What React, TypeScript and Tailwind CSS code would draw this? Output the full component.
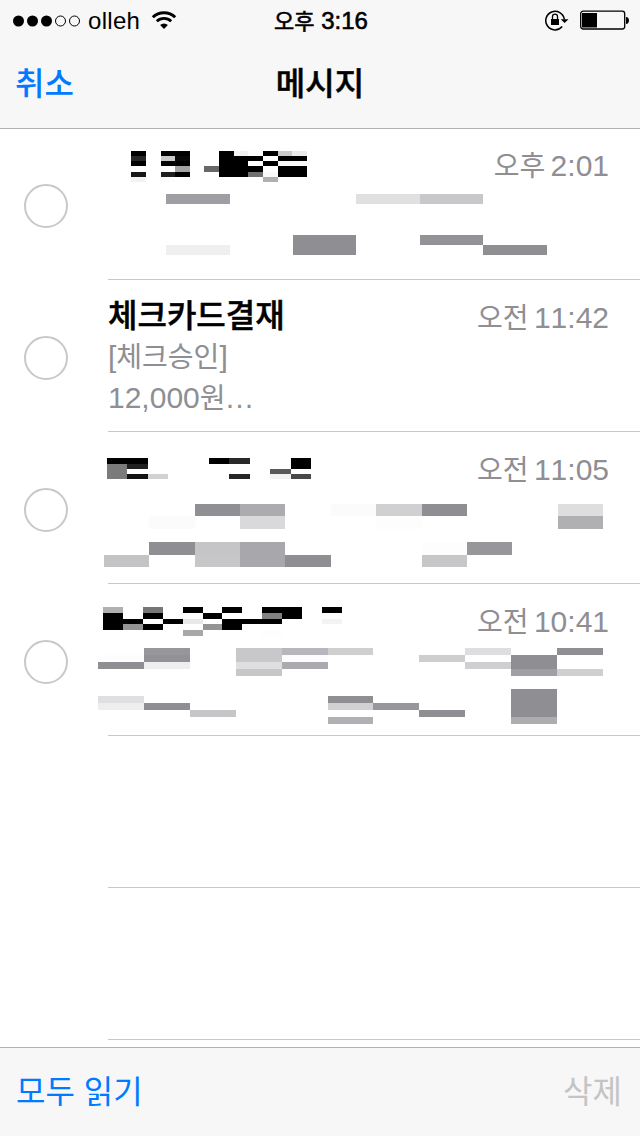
import React, { useState } from "react";
import clsx from "clsx";

interface MosaicGrid {
  xs: number[];
  ys: number[];
  rows: string[];
}

interface Thread {
  id: number;
  period: string;
  time: string;
  title?: string;
  preview?: React.ReactNode;
  titleMosaic?: MosaicGrid;
  previewMosaic?: MosaicGrid;
}

// Cells are hex fills separated by spaces, "." leaves a cell empty
const Mosaic = ({ grid, className }: { grid: MosaicGrid; className: string }) => (
  <svg className={className} shapeRendering="crispEdges" aria-hidden="true">
    {grid.rows.flatMap((row, r) =>
      row.split(" ").map((fill, c) =>
        fill === "." || fill === "" ? null : (
          <rect
            key={`${r}-${c}`}
            x={grid.xs[c]}
            y={grid.ys[r]}
            width={grid.xs[c + 1] - grid.xs[c]}
            height={grid.ys[r + 1] - grid.ys[r]}
            fill={`#${fill}`}
          />
        ),
      ),
    )}
  </svg>
);

const threads: Thread[] = [
  {
    id: 1,
    period: "오후",
    time: "2:01",
    titleMosaic: {
      xs: [33, 48, 63, 77, 92, 106, 121, 136, 150, 165, 180, 194, 209],
      ys: [23, 28, 33, 38, 44, 49, 54],
      rows: [
        "000 . 000 000 . . 000 f2f2f2 fdfdfd 000 cbcbcb ebebeb",
        "262626 . c8c8c8 080808 . . 000 000 000 . 000 000",
        "000 . 000 000 . . 000 000 . 000 f9f9f9 f9f9f9",
        ". . . a3a3a3 . 686868 000 000 000 . 000 000",
        "171717 . 1f1f1f 000 . . 000 000 707070 fafafa 000 000",
        "f3f3f3 . fcfcfc . . . . . . b0b0b0 . .",
      ],
    },
    previewMosaic: {
      xs: [68, 132, 195, 258, 322, 385, 449],
      ys: [6, 16, 47, 57, 67],
      rows: [
        "9f9ea3 . . e0e0e1 c8c7c9 .",
        "",
        ". . 8f8e93 . 939297 .",
        "efeff0 . 8f8e93 . . 8f8e93",
      ],
    },
  },
  {
    id: 2,
    period: "오전",
    time: "11:42",
    title: "체크카드결재",
    preview: (
      <>
        <p>
          [<span className="text-[28px]">체크승인</span>]
        </p>
        <p>
          12,000<span className="-mr-px text-[28px]">원</span>…
        </p>
      </>
    ),
  },
  {
    id: 3,
    period: "오전",
    time: "11:05",
    titleMosaic: {
      xs: [9, 29, 50, 70, 91, 111, 131, 152, 172, 193, 213],
      ys: [26, 32, 37, 42, 47],
      rows: [
        "000 000 . . . 000 292929 . . 000",
        "7b7b7b 202020 . . . . . . . 000",
        "7b7b7b . . . . . . . 5a5a5a .",
        "7b7b7b 121212 d2d2d2 . . . 262626 . f3f3f3 494949",
      ],
    },
    previewMosaic: {
      xs: [6, 51, 97, 142, 187, 233, 278, 324, 369, 414, 460, 505],
      ys: [12, 24, 37, 50, 63, 75],
      rows: [
        ". . 908f94 acabb0 . fbfbfb d0cfd1 8f8e93 . . dededf",
        ". fbfbfb . d9d9db . . fdfdfd . . . b0afb1",
        "",
        ". 8f8e93 c5c4c7 a8a7ac . . . fdfdfd 97969b . .",
        "c4c3c5 . c7c6c8 a8a7ac 8f8e93 . . c7c6c8 . . .",
      ],
    },
  },
  {
    id: 4,
    period: "오전",
    time: "10:41",
    titleMosaic: {
      xs: [5, 25, 45, 65, 85, 105, 124, 144, 164, 184, 204, 224, 244],
      ys: [23, 29, 35, 40, 46, 52],
      rows: [
        "b0b0b0 . 767676 . 000 . 000 . 000 000 . 000",
        "000 . 000 . . 000 . . 808080 000 . .",
        "000 000 . 000 e8e8e8 . 000 000 000 . . f3f3f3",
        "000 949494 000 . . 949494 000 . . . . .",
        ". . . . a8a8a8 . . . fdfdfd . . .",
      ],
    },
    previewMosaic: {
      xs: [0, 46, 92, 138, 184, 230, 275, 321, 367, 413, 459, 505],
      ys: [4, 11, 18, 25, 32, 45, 52, 59, 66, 73, 80],
      rows: [
        ". 97969b . c8c8ca b7b6bc cfcfd0 . . dedee0 . 8f8e93",
        "fdfdfd 929196 . c8c8ca fcfcfe . . cecdcf . 8f8e93 .",
        "8f8e93 eeeeee . dfdfe1 abaaaf . . . cfcfd1 8f8e93 .",
        ". . . c7c6c8 . . . . . a09fa4 cfcfcf",
        "",
        ". . . . . . . . . 8f8e93 .",
        "dfdfe1 . . . . 8f8e93 . . . 8f8e93 .",
        "eeeeee 8f8e93 . . . d1d1d3 97969b . . 8f8e93 .",
        ". . c6c5c8 . . . . 8f8e93 . 8f8e93 .",
        ". . . . . b1b0b5 . . . adacae .",
      ],
    },
  },
];

const StatusBar = () => (
  <div className="grid h-10 grid-cols-[1fr_auto_1fr] items-center pl-[13px] pr-[11px] text-[24px] leading-none text-black">
    <div className="flex items-center">
      <svg width="68" height="12" viewBox="0 0 68 12" className="mt-px">
        {[0, 1, 2, 3, 4].map((i) => (
          <circle
            key={i}
            cx={5.5 + i * 14}
            cy="6"
            r={i < 3 ? 5.5 : 5}
            fill={i < 3 ? "#000" : "none"}
            stroke={i < 3 ? "none" : "#000"}
          />
        ))}
      </svg>
      <span className="ml-[7px] pt-[2px] tracking-[0.3px]">olleh</span>
      <svg width="26" height="20" viewBox="0 0 26 20" className="ml-[11px]" fill="none" stroke="#000">
        <path d="M1.8 7.2a16 16 0 0 1 22.4 0" strokeWidth="3" />
        <path d="M5.8 11.2a10.4 10.4 0 0 1 14.4 0" strokeWidth="2.8" />
        <path d="M13 19l-3.9-4a5.6 5.6 0 0 1 7.8 0z" fill="#000" stroke="none" />
      </svg>
    </div>
    <span className="pt-px [-webkit-text-stroke:0.6px_#000]">
      <span className="text-[22px]">오후</span> 3:16
    </span>
    <div className="flex items-center justify-end">
      <svg width="24" height="22" viewBox="0 0 24 22" fill="none" stroke="#000">
        <path d="M17.2 17.6A9.3 9.3 0 1 1 19.3 10.5" strokeWidth="1.5" />
        <path d="M15.7 10.2h7.8L19.6 14z" fill="#000" stroke="none" />
        <rect x="6" y="10" width="8" height="6" fill="#000" stroke="none" />
        <path d="M7.5 10.5V7.6a2.5 2.5 0 0 1 5 0v2.9" strokeWidth="1.3" />
      </svg>
      <svg width="49" height="20" viewBox="0 0 49 20" className="ml-[11px]">
        <rect x="0.7" y="1.2" width="44" height="17.8" rx="2.5" fill="none" stroke="#000" strokeWidth="1.3" />
        <rect x="2" y="3" width="15" height="14.5" fill="#000" />
        <path d="M46 7c4 0 4 7 0 7z" fill="#000" />
      </svg>
    </div>
  </div>
);

interface ThreadRowProps {
  thread?: Thread;
  selected?: boolean;
  onToggle?: () => void;
}

const ThreadRow = ({ thread, selected, onToggle }: ThreadRowProps) => (
  <li className="flex h-[152px] pl-6">
    <div className="w-[84px] shrink-0 pt-14">
      {thread && (
        <button
          onClick={onToggle}
          aria-label="선택"
          className={clsx(
            "block size-11 rounded-full border-2",
            selected ? "border-[#007aff] bg-[#007aff]" : "border-[#c7c7cc]",
          )}
        />
      )}
    </div>
    <div className="flex-1 border-b border-[#c8c7cc]">
      {thread && (
        <>
          <div className="flex h-[60px] justify-between pr-[31px]">
            {thread.titleMosaic ? (
              <Mosaic grid={thread.titleMosaic} className="-ml-[10px] h-[60px] w-[300px]" />
            ) : (
              <h2 className="pt-[18px] text-[32px] font-medium leading-[36px] text-black [-webkit-text-stroke:0.5px_#000]">
                {thread.title}
              </h2>
            )}
            <span className="whitespace-nowrap pt-[20px] text-[30px] leading-[36px] text-[#8e8e93] [font-kerning:none] [word-spacing:-3px]">
              <span className="text-[28px]">{thread.period}</span> {thread.time}
            </span>
          </div>
          {thread.previewMosaic ? (
            <Mosaic grid={thread.previewMosaic} className="-ml-[10px] h-[91px] w-[520px]" />
          ) : (
            <div className="-mt-[3px] text-[30px] leading-10 text-[#8e8e93]">{thread.preview}</div>
          )}
        </>
      )}
    </div>
  </li>
);

export default function App() {
  const [selected, setSelected] = useState<number[]>([]);

  const toggle = (id: number) =>
    setSelected((prev) => (prev.includes(id) ? prev.filter((i) => i !== id) : [...prev, id]));

  return (
    <div className="flex h-[1136px] w-[640px] flex-col overflow-hidden bg-white font-['Liberation_Sans','Noto_Sans_CJK_KR',sans-serif]">
      <header className="relative h-32 shrink-0 bg-[#f7f7f7] shadow-[0_1px_0_#b2b2b2]">
        <StatusBar />
        <div className="grid h-[88px] grid-cols-[1fr_auto_1fr] items-center px-[15px] text-[32px] leading-none">
          <button onClick={() => setSelected([])} className="justify-self-start font-medium text-[#007aff]">
            취소
          </button>
          <h1 className="font-medium text-black [-webkit-text-stroke:0.5px_#000]">메시지</h1>
        </div>
      </header>

      <ul className="flex-1 overflow-hidden">
        {threads.map((thread) => (
          <ThreadRow
            key={thread.id}
            thread={thread}
            selected={selected.includes(thread.id)}
            onToggle={() => toggle(thread.id)}
          />
        ))}
        <ThreadRow />
        <ThreadRow />
      </ul>

      <footer className="flex h-[89px] shrink-0 items-center justify-between border-t border-[#b2b2b2] bg-[#f7f7f7] pl-4 pr-[18px] text-[32px] leading-none">
        <button className="text-[#007aff]">모두 읽기</button>
        <button className="text-[#c4c4c4]" disabled={selected.length === 0}>
          삭제
        </button>
      </footer>
    </div>
  );
}
